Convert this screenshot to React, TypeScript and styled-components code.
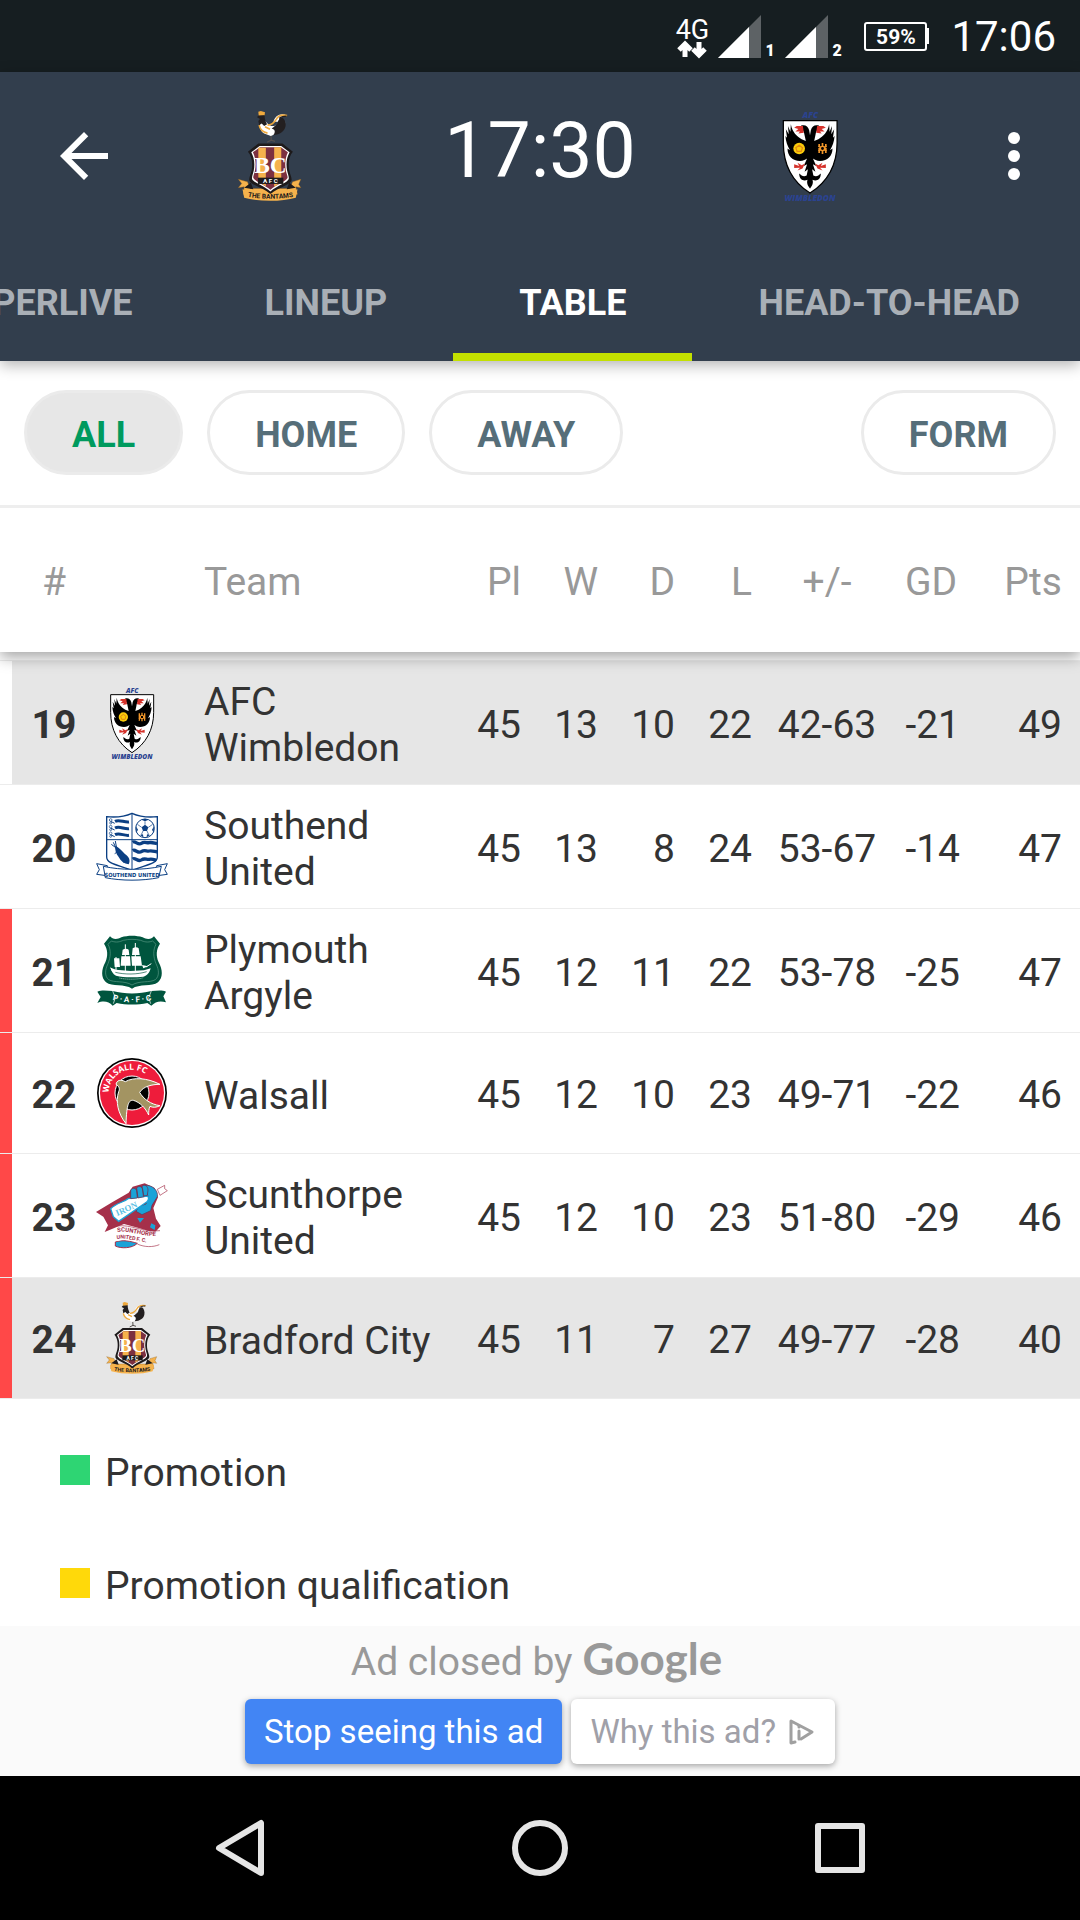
import React from "react";
import styled, { createGlobalStyle } from "styled-components";

const GlobalStyle = createGlobalStyle`
  *, *::before, *::after { box-sizing: border-box; }
  body { margin: 0; background: #000; }
  button { font: inherit; color: inherit; background: none; border: 0; padding: 0; margin: 0; cursor: pointer; }
  svg { display: block; flex: none; overflow: visible; }
`;

const Screen = styled.div`
  display: flex;
  flex-direction: column;
  height: 100vh;
  overflow: hidden;
  background: #fff;
  color: #333;
  font-family: Roboto, "Noto Sans", sans-serif;
  font-size: 39px;
  line-height: 46px;
`;

/* Status bar */

const StatusBar = styled.div`
  flex: none;
  display: flex;
  align-items: center;
  justify-content: flex-end;
  height: 72px;
  padding: 2px 24px 0 0;
  background: #161e21;
  color: #fff;
`;

const DataIndicator = styled.div`
  display: flex;
  flex-direction: column;
  align-items: center;
  width: 32px;
  margin-right: 10px;
  font-size: 27px;
  font-weight: 400;
  line-height: 24px;
`;

const Signal = styled.div`
  display: flex;
  align-items: flex-end;
  gap: 4px;
  width: 67px;
  padding-bottom: 2px;
  font-size: 16px;
  font-weight: 900;
  line-height: 14px;
`;

const Battery = styled.div`
  display: flex;
  align-items: center;
  margin: 0 22px 2px 12px;

  &::after {
    content: "";
    width: 2px;
    height: 16px;
    background: #fff;
  }
`;

const BatteryBody = styled.div`
  width: 63px;
  height: 29px;
  border: 2px solid #fff;
  border-radius: 3px;
  font-size: 21px;
  font-weight: 700;
  line-height: 27px;
  text-align: center;
`;

const StatusClock = styled.time`
  font-size: 42px;
  line-height: 48px;
`;

/* App bar */

const AppBar = styled.header`
  flex: none;
  position: relative;
  z-index: 2;
  background: #323e4d;
  color: #fff;
  box-shadow: 0 4px 14px rgba(0, 0, 0, 0.3);
`;

const Toolbar = styled.div`
  display: grid;
  grid-template-columns: 1fr 2fr 2fr 2fr 1fr;
  align-items: center;
  justify-items: center;
  height: 168px;
`;

const IconButton = styled.button<{ $side: "start" | "end" }>`
  width: 72px;
  height: 72px;
  justify-self: ${(p) => p.$side};
  margin: 0 ${(p) => (p.$side === "end" ? 30 : 0)}px 0 ${(p) => (p.$side === "start" ? 48 : 0)}px;
`;

const KickOff = styled.time`
  padding-bottom: 10px;
  font-size: 77px;
  line-height: 90px;
`;

const Tabs = styled.nav`
  display: flex;
  justify-content: flex-end;
  height: 121px;
  margin-right: -6px;
`;

const Tab = styled.button<{ $active?: boolean }>`
  flex: none;
  padding: 12px 66px 0;
  border-bottom: 8px solid ${(p) => (p.$active ? "#c3e000" : "transparent")};
  color: ${(p) => (p.$active ? "#fff" : "#a9afb6")};
  font-size: 36px;
  font-weight: 700;
`;

/* Filters */

const Filters = styled.div`
  display: flex;
  gap: 24px;
  padding: 29px 24px 30px;
  border-bottom: 3px solid #eee;
`;

const Chip = styled.button<{ $selected?: boolean; $end?: boolean }>`
  height: 85px;
  padding: 4px 45px 0;
  margin-left: ${(p) => (p.$end ? "auto" : 0)};
  border: 3px solid #ebebeb;
  border-radius: 43px;
  background: ${(p) => (p.$selected ? "#e7e7e7" : "#fff")};
  color: ${(p) => (p.$selected ? "#009a5e" : "#566e79")};
  font-size: 36px;
  font-weight: 700;
`;

/* Standings */

const Content = styled.main`
  flex: 1;
  min-height: 0;
  overflow: hidden;
`;

const Standings = styled.table`
  width: 100%;
  table-layout: fixed;
  border-spacing: 0;
`;

const Head = styled.thead`
  position: relative;
  z-index: 1;
  background: #fff;
  color: #999;
  box-shadow: 0 5px 14px rgba(0, 0, 0, 0.36);
  clip-path: inset(0 0 -24px 0);
`;

type Align = "left" | "center" | "right";

const HeadCell = styled.th<{ $align?: Align; $bar?: boolean; $last?: boolean }>`
  height: 144px;
  padding: 4px ${(p) => (p.$last ? 18 : 0)}px 0 ${(p) => (p.$bar ? 12 : 0)}px;
  font-weight: 400;
  text-align: ${(p) => p.$align ?? "right"};
`;

const PeekCell = styled.td`
  height: 9px;
  padding: 0;
  border-bottom: 1px solid #ececec;
`;

const Row = styled.tr<{ $highlight?: boolean }>`
  background: ${(p) => (p.$highlight ? "#e6e6e6" : "#fff")};
`;

const Cell = styled.td<{ $align?: Align; $last?: boolean }>`
  height: 121px;
  padding: 4px ${(p) => (p.$last ? 18 : 0)}px 0 0;
  border-bottom: 1px solid #ececec;
  text-align: ${(p) => p.$align ?? "right"};
  white-space: nowrap;
`;

const RankCell = styled(Cell)<{ $zone: string }>`
  background: linear-gradient(to right, ${(p) => p.$zone} 12px, transparent 12px);
  padding-left: 12px;
  font-weight: 700;
`;

const CrestCell = styled(Cell)`
  padding: 0;
`;

const NameCell = styled(Cell)`
  padding: 18px 0 13px;
  white-space: normal;
`;

const Legend = styled.ul`
  margin: 0;
  padding: 17px 60px;
  list-style: none;
`;

const LegendItem = styled.li`
  display: flex;
  align-items: center;
  gap: 15px;
  height: 113px;
`;

const Swatch = styled.span<{ $color: string }>`
  width: 30px;
  height: 30px;
  margin-bottom: 5px;
  background: ${(p) => p.$color};
`;

/* Advert */

const Advert = styled.aside`
  flex: none;
  display: flex;
  flex-direction: column;
  align-items: center;
  gap: 15px;
  height: 150px;
  padding-top: 6px;
  background: #fafafa;
`;

const AdNotice = styled.div`
  display: flex;
  align-items: baseline;
  gap: 10px;
  height: 52px;
  padding-right: 7px;
  color: #999;
  line-height: 52px;
`;

const Brand = styled.span`
  font-family: Lato, sans-serif;
  font-size: 44px;
  font-weight: 700;
`;

const AdActions = styled.div`
  display: flex;
  gap: 9px;
`;

const AdButton = styled.button<{ $primary?: boolean }>`
  display: flex;
  align-items: center;
  gap: 12px;
  height: 65px;
  padding: 0 19px;
  border-radius: 6px;
  background: ${(p) => (p.$primary ? "#4285f4" : "#fff")};
  color: ${(p) => (p.$primary ? "#fff" : "#a0a0a8")};
  font-size: 33px;
  box-shadow: 0 2px 6px rgba(0, 0, 0, 0.35);
`;

const SystemNav = styled.nav`
  flex: none;
  display: flex;
  align-items: center;
  justify-content: center;
  gap: 228px;
  height: 144px;
  background: #000;
`;

const NavButton = styled.button`
  width: 72px;
  height: 72px;
`;

/* Crests */

function BradfordCrest({ size }: { size: number }) {
  return (
    <svg width={size} height={size} viewBox="0 0 216 216" role="img" aria-label="Bradford City">
      <path d="M110 52L111 72M111 70L101 75M111 70L120 73" stroke="#55504e" strokeWidth="3" fill="none" />
      <path d="M84 22C82 36 84 48 94 54L110 60L124 54C138 48 146 38 144 24L128 30C120 38 110 38 104 32L96 24Z" fill="#fff" />
      <path d="M80 2L86 0L96 3L95 11L81 12Z" fill="#efa93d" />
      <path d="M80 11L95 10C95 20 98 26 101 32L94 36L88 30L82 34L80 24L84 19L77 15Z" fill="#231f20" />
      <path d="M116 26C120 12 132 4 148 10C138 11 130 16 128 26Z" fill="#fff" />
      <path d="M126 30C128 20 132 16 138 16C144 20 147 30 145 38C142 50 132 56 116 58C122 50 120 44 112 42C118 38 122 34 126 30Z" fill="#231f20" />
      <path d="M102 34C112 34 118 28 123 20C127 12 136 8 149 11M82 34C84 44 92 51 102 53M96 38L108 44" stroke="#efa93d" strokeWidth="4" fill="none" />
      <path d="M130 18C134 13 140 12 148 12" stroke="#231f20" strokeWidth="3" fill="none" />
      <path d="M32 164L54 170L60 186L156 186L162 170L182 164L177 176L182 184L170 182L174 200L158 204L58 204L44 200L46 182L32 184L40 174Z" fill="#f5b24c" stroke="#8a5a1c" strokeWidth="1" />
      <path d="M46 184L62 172L68 188ZM170 184L154 172L148 188Z" fill="#1d1a1b" />
      <path d="M80 78H138L163 98C154 108 151 124 154 142C156 152 160 158 160 166C156 178 128 182 109 200C90 182 62 178 58 166C58 158 62 152 64 142C67 124 64 108 55 98Z" fill="#1d1a1b" />
      <path d="M83 84H135L155 99C148 112 146 126 149 143C151 152 154 158 153 163C150 172 126 178 109 193C92 178 68 172 65 163C64 158 67 152 69 143C72 126 70 112 63 99Z" fill="#fff" />
      <path d="M84 87H134L151 99C145 112 143 126 146 143C148 152 151 157 150 161C146 169 125 176 109 189C93 176 72 169 68 161C67 157 70 152 72 143C75 126 73 112 67 99Z" fill="#7c3040" />
      <path d="M80 88H98V181C92 176 84 172 80 169ZM118 87H135V171C129 174 124 178 118 182Z" fill="#f5b24c" />
      <text x="109" y="149" textAnchor="middle" fontFamily="Liberation Serif, serif" fontSize="56" fontWeight="700" fill="#fff">BC</text>
      <rect x="79" y="160" width="61" height="15" fill="#1d1a1b" />
      <text x="109" y="173" textAnchor="middle" fontFamily="Roboto, sans-serif" fontSize="15" fontWeight="700" fill="#fff">A F C</text>
      <path d="M42 188C76 202 142 202 174 188L170 208C136 218 82 218 46 208Z" fill="#f5b24c" />
      <path id="bantamsArc" d="M46 204C82 213 134 213 172 204" fill="none" />
      <text fontFamily="Roboto, sans-serif" fontSize="16" fontWeight="700" fill="#1d1a1b" textAnchor="middle">
        <textPath href="#bantamsArc" startOffset="50%">THE BANTAMS</textPath>
      </text>
    </svg>
  );
}

function WimbledonCrest({ size }: { size: number }) {
  return (
    <svg width={size} height={size} viewBox="0 0 216 216" role="img" aria-label="AFC Wimbledon">
      <g fontFamily="Open Sans, sans-serif" fontWeight="800" fontStyle="italic" fill="#2b4390" textAnchor="middle">
        <text x="109" y="17" fontSize="20">AFC</text>
        <text x="108" y="216" fontSize="20">WIMBLEDON</text>
      </g>
      <path d="M44 23H173V76C173 128 150 170 108 197C66 170 44 128 44 76Z" fill="#fff" stroke="#000" strokeWidth="3" />
      <g id="eagleHalf">
        <path
          d="M109 64L106 46C103 36 96 32 87 35L82 40C90 42 94 48 95 58L98 72L88 68C76 60 66 52 62 32L61 50L55 36L57 56L50 44L53 64L49 60C50 74 54 84 60 94L54 90C54 108 66 120 84 120C92 120 98 116 101 114L93 132L101 128L95 146L103 140L100 155C92 159 88 155 82 150C82 164 92 170 102 165C99 174 104 182 109 186Z"
          fill="#000"
        />
        <path d="M91 36L76 36L70 40L80 43L73 49L84 49L80 54L93 52Z" fill="#d5322b" />
        <path d="M70 128L82 132L78 124L88 130L96 126L90 138L78 143L84 136L70 137Z" fill="#d5322b" />
      </g>
      <use href="#eagleHalf" transform="translate(216 0) scale(-1 1)" />
      <circle cx="82" cy="90" r="14" fill="#fbcb0a" />
      <path d="M82 82L90 88L87 97H77L74 88Z" fill="none" stroke="#e08a12" strokeWidth="3" />
      <path d="M138 77V103M128 84L148 96M128 96L148 84M130 79V101M146 79V101" stroke="#f0962a" strokeWidth="4" />
      <circle cx="138" cy="90" r="5" fill="#000" stroke="#f0962a" strokeWidth="3" />
    </svg>
  );
}

function SouthendCrest({ size }: { size: number }) {
  const ink = "#0b3f83";
  return (
    <svg width={size} height={size} viewBox="0 0 216 216" role="img" aria-label="Southend United">
      <path d="M32 17C60 20 88 16 108 7C128 16 156 20 184 17V138C184 160 144 162 108 178C72 162 32 160 32 138Z" fill="#fff" stroke={ink} strokeWidth="4" />
      <path d="M108 7V176M32 86H184" stroke={ink} strokeWidth="3" />
      {[30, 50, 70].map((y) => (
        <g key={y} fill="none" stroke={ink}>
          <path d={`M57 ${y + 1}C70 ${y - 6} 84 ${y + 5} 99 ${y + 3}`} strokeWidth="9" />
          <path d={`M56 ${y + 7}L44 ${y + 1}`} strokeWidth="3" />
          <circle cx="44" cy={y - 3} r="4" strokeWidth="2" />
          <circle cx="44" cy={y + 6} r="3" strokeWidth="2" />
        </g>
      ))}
      <circle cx="147" cy="52" r="28" fill="#fff" stroke={ink} strokeWidth="3" />
      <path d="M147 41L157 49L153 60H141L137 49ZM136 26L147 31L158 26L147 23ZM120 46L126 56L121 65ZM174 46L168 56L173 65ZM132 72L141 70L142 79ZM162 72L153 70L152 79Z" fill={ink} />
      <path d="M147 41V31M157 49L170 40M153 60L158 71M141 60L136 71M137 49L124 40" stroke={ink} strokeWidth="2" />
      <path d="M58 104C68 108 78 120 86 128C100 138 104 148 98 160C84 158 74 150 68 138C60 128 56 116 58 104Z" fill={ink} />
      <path d="M58 90L62 112L46 100M52 94L62 116M62 124L56 128M92 138L78 142M96 150L82 154" stroke={ink} strokeWidth="3" fill="none" />
      <path d="M110 94C118 88 126 104 136 97S152 97 160 95S176 97 183 98M110 119C118 113 126 129 136 122S152 122 160 120S176 122 183 123M110 144C118 138 126 154 136 147S152 147 160 145S174 146 181 148" stroke={ink} strokeWidth="10" fill="none" />
      <path d="M2 158L34 164L32 194L2 190L10 176ZM214 158L182 164L184 194L214 190L206 176Z" fill="#fff" stroke={ink} strokeWidth="3" />
      <path d="M22 166C76 178 140 178 196 166L188 200C140 210 76 210 28 200Z" fill="#fff" stroke={ink} strokeWidth="3" />
      <text x="108" y="197" textAnchor="middle" fontFamily="DejaVu Sans Condensed, Roboto, sans-serif" fontSize="17" fontWeight="700" fill={ink}>SOUTHEND UNITED</text>
    </svg>
  );
}

function PlymouthCrest({ size }: { size: number }) {
  return (
    <svg width={size} height={size} viewBox="0 0 216 216" role="img" aria-label="Plymouth Argyle">
      <path d="M42 4L48 9C58 14 66 12 76 7C96 1 120 1 140 7C150 12 158 14 168 9L174 4L192 26C180 44 180 62 188 82C200 104 202 128 186 142C168 156 130 146 108 161C86 146 48 156 30 142C14 128 16 104 28 82C36 62 36 44 24 26Z" fill="#00553e" />
      <path d="M46 18C62 24 72 20 82 16C98 12 118 12 134 16C144 20 154 24 170 18L180 28C170 46 172 66 180 86C190 106 190 124 178 134C162 144 130 136 108 150C86 136 54 144 38 134C26 124 26 106 36 86C44 66 46 46 36 28Z" fill="none" stroke="#5c9a86" strokeWidth="2" />
      <path d="M88 28V110M118 24V110M60 66V110M50 110L44 98M150 96L166 86" stroke="#fff" strokeWidth="3" />
      <path d="M80 44C86 40 94 40 98 44L100 60H78ZM110 40C116 36 124 36 128 40L131 60H108ZM76 64H102L104 92H74ZM106 64H134L138 92H108ZM54 70H70L72 96H56ZM138 90L156 94L142 100Z" fill="#fff" />
      <path d="M44 98L60 104L104 108L144 106L164 100C160 114 154 122 142 125C112 128 82 128 60 122C50 116 46 108 44 98Z" fill="#fff" />
      <path d="M58 112C86 119 124 119 152 110" stroke="#00553e" strokeWidth="2" fill="none" />
      <path d="M70 129C90 134 126 134 142 128" stroke="#7fb0a0" strokeWidth="3" strokeDasharray="4 2" fill="none" />
      <path d="M4 170C20 164 34 168 50 168C86 178 130 178 166 168C182 168 196 164 210 170L202 184L210 202C192 196 178 200 166 212L154 204C124 210 92 210 62 204L50 212C38 200 24 196 4 204L14 186Z" fill="#00553e" />
      <path d="M50 168L58 188L52 206M166 168L158 188L164 206" stroke="#fff" strokeWidth="2" fill="none" />
      <path id="pafcArc" d="M42 193C80 205 136 205 174 193" fill="none" />
      <text fontFamily="Roboto, sans-serif" fontSize="24" fontWeight="700" fill="#fff" textAnchor="middle">
        <textPath href="#pafcArc" startOffset="50%">P · A · F · C</textPath>
      </text>
    </svg>
  );
}

function WalsallCrest({ size }: { size: number }) {
  return (
    <svg width={size} height={size} viewBox="0 0 216 216" role="img" aria-label="Walsall">
      <circle cx="108" cy="108" r="105" fill="#000" />
      <circle cx="108" cy="108" r="100" fill="#fff" />
      <circle cx="108" cy="108" r="96" fill="#ee1c3b" />
      <circle cx="108" cy="108" r="51" fill="#000" stroke="#fff" strokeWidth="3" />
      <path d="M60 82C62 70 74 66 88 74C112 60 152 62 192 82C168 82 142 88 131 106C142 126 164 142 192 146C180 152 170 152 162 148C158 156 158 164 158 174C148 152 132 136 112 130C98 128 92 142 90 200C66 170 58 134 68 104C72 96 70 88 60 82Z" fill="#a39462" stroke="#fff" strokeWidth="3" />
      <path id="walsallArc" d="M38 108A70 70 0 0 1 178 108" fill="none" />
      <text fontFamily="Open Sans, sans-serif" fontSize="25" fontWeight="700" fill="#fff">
        <textPath href="#walsallArc" startOffset="1">WALSALL FC</textPath>
      </text>
    </svg>
  );
}

function ScunthorpeCrest({ size }: { size: number }) {
  return (
    <svg width={size} height={size} viewBox="0 0 216 216" role="img" aria-label="Scunthorpe United">
      <path d="M0 96L46 68L98 38L110 20L146 10L176 24L186 52L172 84L180 116L194 138L178 156L156 152L128 144L84 132L26 156L36 136L22 110Z" fill="#a5304a" />
      <path d="M148 16C168 14 188 32 184 50L168 76L164 92L138 104L120 94L128 80L150 72L156 50Z" fill="#1aa3d8" stroke="#6d2a4a" strokeWidth="2" />
      <path d="M124 114H144L132 128ZM166 130L178 136L176 150L162 142Z" fill="#1aa3d8" />
      <path d="M44 86C60 70 84 66 96 56L154 48C160 52 158 60 152 66L68 124L52 110Z" fill="#fff" stroke="#1aa3d8" strokeWidth="4" />
      <text x="64" y="108" fontFamily="Liberation Serif, serif" fontSize="26" fontWeight="700" fill="#5cbfe4" transform="rotate(-24 64 108)">IRON</text>
      <path d="M104 30C110 22 120 24 122 32L124 54L104 56ZM122 24C130 16 138 20 140 28L144 50L126 54ZM138 18C148 12 156 20 156 30L154 46L142 48Z" fill="#1aa3d8" stroke="#6d2a4a" strokeWidth="2" />
      <path d="M184 28L206 16V26L214 32L192 46Z" fill="#fff" stroke="#a5304a" strokeWidth="2" />
      <path d="M58 186C80 178 104 184 124 190C108 206 74 206 58 198Z" fill="#1aa3d8" stroke="#a5304a" strokeWidth="3" />
      <path d="M66 140C100 132 140 160 192 154L190 190C140 196 104 170 62 184Z" fill="#fff" />
      <path d="M64 138C104 132 140 158 192 152M124 192C146 202 170 202 190 194" fill="none" stroke="#a5304a" strokeWidth="2" />
      <path id="scunTop" d="M64 156C104 150 140 172 194 168" fill="none" />
      <path id="scunLow" d="M62 177C104 171 140 193 192 189" fill="none" />
      <g fontFamily="Roboto, sans-serif" fontWeight="700" fill="#a5304a">
        <text fontSize="18"><textPath href="#scunTop">SCUNTHORPE</textPath></text>
        <text fontSize="16"><textPath href="#scunLow">UNITED F. C.</textPath></text>
      </g>
    </svg>
  );
}

/* Data */

const RED = "#ff4848";

const teams = [
  { rank: 19, name: "AFC Wimbledon", Crest: WimbledonCrest, zone: "#fff", highlight: true, stats: ["45", "13", "10", "22"], score: "42-63", gd: "-21", pts: 49 },
  { rank: 20, name: "Southend United", Crest: SouthendCrest, zone: "#fff", highlight: false, stats: ["45", "13", "8", "24"], score: "53-67", gd: "-14", pts: 47 },
  { rank: 21, name: "Plymouth Argyle", Crest: PlymouthCrest, zone: RED, highlight: false, stats: ["45", "12", "11", "22"], score: "53-78", gd: "-25", pts: 47 },
  { rank: 22, name: "Walsall", Crest: WalsallCrest, zone: RED, highlight: false, stats: ["45", "12", "10", "23"], score: "49-71", gd: "-22", pts: 46 },
  { rank: 23, name: "Scunthorpe United", Crest: ScunthorpeCrest, zone: RED, highlight: false, stats: ["45", "12", "10", "23"], score: "51-80", gd: "-29", pts: 46 },
  { rank: 24, name: "Bradford City", Crest: BradfordCrest, zone: RED, highlight: true, stats: ["45", "11", "7", "27"], score: "49-77", gd: "-28", pts: 40 },
];

function SignalStrength({ sim }: { sim: number }) {
  return (
    <Signal>
      <svg width="43" height="43" viewBox="0 0 43 43" aria-hidden="true">
        <path d="M43 0V43H0Z" fill="#5d6265" />
        <path d="M31 12V43H0Z" fill="#fff" />
      </svg>
      {sim}
    </Signal>
  );
}

export default function App() {
  return (
    <Screen>
      <GlobalStyle />
      <StatusBar>
        <DataIndicator>
          4G
          <svg width="30" height="15" viewBox="0 0 30 15" fill="none" stroke="#fff" strokeWidth="5" aria-hidden="true">
            <path d="M8 15V4M2 8L8 2L14 8M22 0V11M16 7L22 13L28 7" />
          </svg>
        </DataIndicator>
        <SignalStrength sim={1} />
        <SignalStrength sim={2} />
        <Battery>
          <BatteryBody>59%</BatteryBody>
        </Battery>
        <StatusClock>17:06</StatusClock>
      </StatusBar>

      <AppBar>
        <Toolbar>
          <IconButton $side="start" aria-label="Back">
            <svg width="72" height="72" viewBox="0 0 24 24" fill="#fff">
              <path d="M20 11H7.83l5.59-5.59L12 4l-8 8 8 8 1.41-1.41L7.83 13H20v-2z" />
            </svg>
          </IconButton>
          <BradfordCrest size={90} />
          <KickOff>17:30</KickOff>
          <WimbledonCrest size={90} />
          <IconButton $side="end" aria-label="More options">
            <svg width="72" height="72" viewBox="0 0 24 24" fill="#fff">
              <circle cx="12" cy="6" r="2" />
              <circle cx="12" cy="12" r="2" />
              <circle cx="12" cy="18" r="2" />
            </svg>
          </IconButton>
        </Toolbar>
        <Tabs>
          <Tab>SUPERLIVE</Tab>
          <Tab>LINEUP</Tab>
          <Tab $active>TABLE</Tab>
          <Tab>HEAD-TO-HEAD</Tab>
        </Tabs>
      </AppBar>

      <Content>
        <Filters>
          <Chip $selected>ALL</Chip>
          <Chip>HOME</Chip>
          <Chip>AWAY</Chip>
          <Chip $end>FORM</Chip>
        </Filters>
        <Standings>
          <colgroup>
            <col width="96" />
            <col width="108" />
            <col />
            <col width="77" />
            <col width="77" />
            <col width="77" />
            <col width="77" />
            <col width="150" />
            <col width="58" />
            <col width="120" />
          </colgroup>
          <Head>
            <tr>
              <HeadCell $align="center" $bar>#</HeadCell>
              <HeadCell />
              <HeadCell $align="left">Team</HeadCell>
              <HeadCell>Pl</HeadCell>
              <HeadCell>W</HeadCell>
              <HeadCell>D</HeadCell>
              <HeadCell>L</HeadCell>
              <HeadCell $align="center">+/-</HeadCell>
              <HeadCell $align="center">GD</HeadCell>
              <HeadCell $last>Pts</HeadCell>
            </tr>
          </Head>
          <tbody>
            <tr>
              <PeekCell colSpan={10} />
            </tr>
            {teams.map(({ Crest, ...t }) => (
              <Row key={t.rank} $highlight={t.highlight}>
                <RankCell $align="center" $zone={t.zone}>{t.rank}</RankCell>
                <CrestCell $align="left">
                  <Crest size={72} />
                </CrestCell>
                <NameCell $align="left">{t.name}</NameCell>
                {t.stats.map((value, i) => (
                  <Cell key={i}>{value}</Cell>
                ))}
                <Cell $align="center">{t.score}</Cell>
                <Cell>{t.gd}</Cell>
                <Cell $last>{t.pts}</Cell>
              </Row>
            ))}
          </tbody>
        </Standings>
        <Legend>
          <LegendItem>
            <Swatch $color="#2ed573" />
            Promotion
          </LegendItem>
          <LegendItem>
            <Swatch $color="#ffd90a" />
            Promotion qualification
          </LegendItem>
        </Legend>
      </Content>

      <Advert>
        <AdNotice>
          Ad closed by <Brand>Google</Brand>
        </AdNotice>
        <AdActions>
          <AdButton $primary>Stop seeing this ad</AdButton>
          <AdButton>
            Why this ad?
            <svg width="28" height="28" viewBox="0 0 28 28" fill="none" stroke="#a0a0a0" strokeWidth="3" strokeLinejoin="round" strokeLinecap="round" aria-hidden="true">
              <path d="M7 24L3 25V3L24 14L13 21" />
              <path d="M11 13V21M11 8V9" />
            </svg>
          </AdButton>
        </AdActions>
      </Advert>

      <SystemNav>
        <NavButton aria-label="Back">
          <svg width="72" height="72" viewBox="0 0 72 72" fill="none" stroke="#e5e5e5" strokeWidth="6" strokeLinejoin="round">
            <path d="M57 11V61L15 36Z" />
          </svg>
        </NavButton>
        <NavButton aria-label="Home">
          <svg width="72" height="72" viewBox="0 0 72 72" fill="none" stroke="#e5e5e5" strokeWidth="6">
            <circle cx="36" cy="36" r="25" />
          </svg>
        </NavButton>
        <NavButton aria-label="Recent apps">
          <svg width="72" height="72" viewBox="0 0 72 72" fill="none" stroke="#e5e5e5" strokeWidth="6" strokeLinejoin="round">
            <rect x="14" y="14" width="44" height="44" />
          </svg>
        </NavButton>
      </SystemNav>
    </Screen>
  );
}
